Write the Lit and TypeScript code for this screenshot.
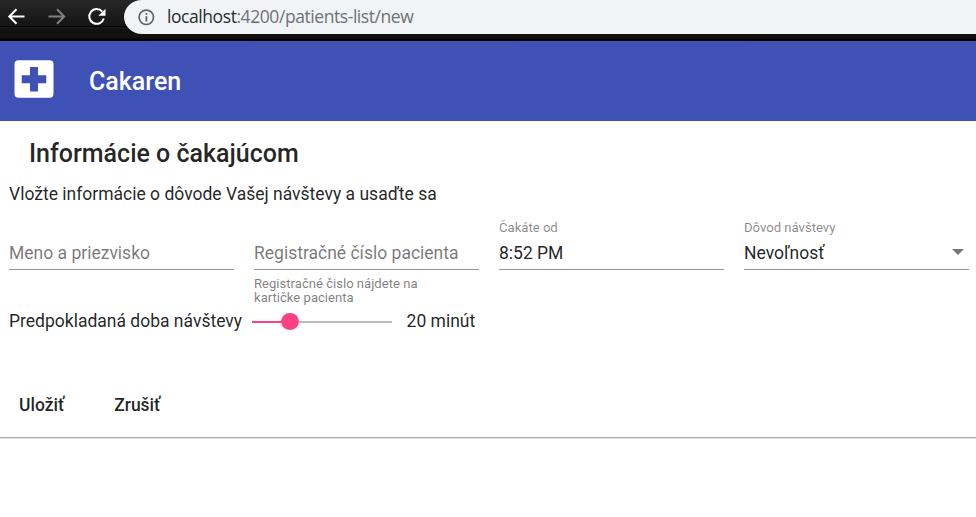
import { LitElement, html, css, nothing } from "lit";
import { customElement, property } from "lit/decorators.js";

@customElement("browser-bar")
class BrowserBar extends LitElement {
  static styles = css`
    :host { display: flex; height: 41px; background: linear-gradient(#272727 0, #151515 26px, #030303 26px, #030303 27px, #191919 27px, #101010 30px, #101210 38px, #000 39px); }
    svg { display: block; flex: none; }
    .nav { width: 124px; height: 34px; }
    .address { flex: 1; height: 34px; background: #f1f3f4; border-radius: 18px 0 0 18px / 17px 0 0 17px; display: flex; align-items: center; color: #6e7276; font: 18px/34px "Open Sans", "Noto Sans", sans-serif; }
    .info { margin-left: 14px; }
    .url { margin-left: 12px; margin-top: -2px; font-size: 17.5px; letter-spacing: -0.43px; white-space: nowrap; }
    .host { color: #2b2c2f; }
  `;
  render() {
    return html`
      <svg class="nav" viewBox="0 0 124 34" fill="none" stroke-width="2">
        <path d="M24.5 16.5H9.5M16.5 9.2l-7.2 7.3 7.2 7.3" stroke="#fff" />
        <path d="M48.5 16.5H64M57 9.2l7.2 7.3-7.2 7.3" stroke="#808080" />
        <path d="M102.3 11.6A7.4 7.4 0 1 0 103.8 18.5" stroke="#fff" />
        <path d="M105.5 8.7v7.1h-7.1z" fill="#fff" />
      </svg>
      <div class="address">
        <svg class="info" width="17" height="17" viewBox="0 0 17 17">
          <circle cx="8.3" cy="8.3" r="7.2" fill="none" stroke="#5f6368" stroke-width="1.7" />
          <path d="M7.5 4h1.8v1.8H7.5zM7.5 7.2h1.8v5.3H7.5z" fill="#5f6368" />
        </svg>
        <span class="url"><span class="host">localhost</span>:4200/patients-list/new</span>
      </div>
    `;
  }
}

@customElement("form-field")
class FormField extends LitElement {
  @property() label = "";
  @property() value = "";
  @property() hint = "";
  @property({ type: Boolean }) select = false;
  static styles = css`
    :host { display: block; width: 225px; }
    .label { height: 16px; font-size: 13.1px; line-height: 14px; color: rgba(0,0,0,.48); white-space: nowrap; }
    .control { display: flex; align-items: center; justify-content: space-between; height: 33px; border-bottom: 1px solid #949494; box-sizing: border-box; }
    .text { line-height: 32px; white-space: nowrap; }
    .placeholder { color: rgba(0,0,0,.54); }
    .arrow { margin-right: 5px; margin-bottom: 2px; border: 6.25px solid transparent; border-top-color: #757575; border-bottom: 0; }
    .hint { width: 190px; margin-top: 7px; font-size: 13.1px; line-height: 14px; color: rgba(0,0,0,.52); }
  `;
  render() {
    return html`
      <div class="label">${this.value ? this.label : nothing}</div>
      <div class="control">
        <span class="text ${this.value ? "" : "placeholder"}">${this.value || this.label}</span>
        ${this.select ? html`<span class="arrow"></span>` : nothing}
      </div>
      ${this.hint ? html`<div class="hint">${this.hint}</div>` : nothing}
    `;
  }
}

@customElement("app-root")
class AppRoot extends LitElement {
  static styles = css`
    :host { display: block; height: 517px; overflow: hidden; background: #fff; color: rgba(0,0,0,.87); font: 400 17.5px/24px Roboto, sans-serif; }
    .toolbar { height: 80px; background: #3f51b5; display: flex; align-items: center; color: #fff; }
    .logo { display: block; margin: 0 35px 3px 14px; }
    .brand { font-size: 25px; font-weight: 500; line-height: 32px; margin-top: 2px; }
    h2 { margin: 17px 0 0 29px; font-size: 25px; line-height: 32px; font-weight: 500; }
    .intro { margin: 12px 0 0 9px; line-height: 24px; }
    .fields { display: flex; gap: 20px; padding-left: 9px; margin-top: 15px; height: 85px; }
    .duration { display: flex; align-items: center; height: 24px; margin: 3px 0 0 9px; white-space: nowrap; }
    .slider { display: flex; align-items: center; width: 140px; margin: 2px 14.5px 0 10px; }
    .filled { width: 30px; height: 2px; background: #ff4081; }
    .thumb { width: 17.5px; height: 17px; margin-bottom: 1px; border-radius: 50%; background: #ff4081; margin-left: -1px; }
    .rest { flex: 1; height: 2px; background: #bababa; }
    .actions { display: flex; gap: 50px; height: 44px; padding-left: 19px; margin-top: 60px; font-weight: 500; line-height: 24px; }
    .divider { height: 1px; background: #a8a8a8; border-bottom: 1px solid #e6e6e6; }
  `;
  render() {
    return html`
      <browser-bar></browser-bar>
      <header class="toolbar">
        <svg class="logo" width="40" height="39" viewBox="0 0 40 39">
          <path fill="#fff" fill-rule="evenodd" d="M4.5 0.2h31a4 4 0 0 1 4 4v29.6a4 4 0 0 1-4 4h-31a4 4 0 0 1-4-4v-29.6a4 4 0 0 1 4-4zM16 7v8.3H7.7v7.9H16v8.3h8v-8.3h8.3v-7.9H24V7z" />
        </svg>
        <span class="brand">Cakaren</span>
      </header>
      <h2>Informácie o čakajúcom</h2>
      <div class="intro">Vložte informácie o dôvode Vašej návštevy a usaďte sa</div>
      <div class="fields">
        <form-field label="Meno a priezvisko"></form-field>
        <form-field label="Registračné číslo pacienta" hint="Registračné čislo nájdete na kartičke pacienta"></form-field>
        <form-field label="Čakáte od" value="8:52 PM"></form-field>
        <form-field label="Dôvod návštevy" value="Nevoľnosť" select></form-field>
      </div>
      <div class="duration">
        <span>Predpokladaná doba návštevy</span>
        <div class="slider"><div class="filled"></div><div class="thumb"></div><div class="rest"></div></div>
        <span>20 minút</span>
      </div>
      <div class="actions"><span>Uložiť</span><span>Zrušiť</span></div>
      <div class="divider"></div>
    `;
  }
}
